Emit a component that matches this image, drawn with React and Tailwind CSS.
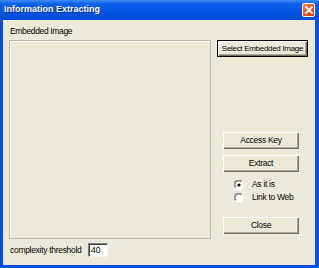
import React, { useState } from "react";

const font = { fontFamily: '"Liberation Sans", Arial, sans-serif' };

const Btn = ({ children, isDefault, className = "" }) => (
  <div
    className={`flex items-center justify-center bg-[#ece9d8] text-black ${
      isDefault
        ? "border border-black text-[8px] tracking-[-0.3px] shadow-[inset_1px_1px_#fff,inset_-1px_-1px_#716f64,inset_-2px_-2px_#aca899]"
        : "text-[8.5px] tracking-[-0.3px] shadow-[inset_1px_1px_#fff,inset_-1px_-1px_#716f64,inset_-2px_-2px_#aca899]"
    } ${className}`}
  >
    {children}
  </div>
);

const Radio = ({ checked, label, onClick }) => (
  <div className="flex items-center h-[13px] pl-[11px] gap-[8px]" onClick={onClick}>
    <svg width="10" height="10" viewBox="0 0 10 10">
      <circle cx="5" cy="5" r="4.5" fill="#fff" />
      <path d="M1.2 7.6 A4.3 4.3 0 0 1 7.6 1.2" fill="none" stroke="#808080" strokeWidth="1" />
      <path d="M2 7 A3.4 3.4 0 0 1 7 2" fill="none" stroke="#404040" strokeWidth="0.8" />
      <path d="M8.8 2.4 A4.3 4.3 0 0 1 2.4 8.8" fill="none" stroke="#f4f3ee" strokeWidth="1" />
      {checked && <circle cx="5" cy="5" r="1.6" fill="#000" />}
    </svg>
    <span className="text-[8.5px] tracking-[-0.3px] text-black">{label}</span>
  </div>
);

export default function App() {
  const [mode, setMode] = useState(0);

  return (
    <div className="w-[319px] h-[268px] flex flex-col bg-[#0a4fdf] overflow-hidden" style={font}>
      {/* title bar */}
      <div className="h-[20px] flex items-center justify-between pl-[4px] pr-[4px] bg-[linear-gradient(180deg,#3d8df5_0%,#0b5fe8_20%,#0055e5_60%,#0049d6_100%)]">
        <span className="text-white font-bold text-[9px] [text-shadow:1px_1px_#0a2a8a]">
          Information Extracting
        </span>
        <div className="w-[13px] h-[14px] rounded-[2px] border border-white bg-[linear-gradient(135deg,#f08a5c_0%,#e0491b_60%,#c83a10_100%)] flex items-center justify-center">
          <svg width="8" height="8" viewBox="0 0 8 8">
            <path d="M1 1 L7 7 M7 1 L1 7" stroke="#fff" strokeWidth="1.8" strokeLinecap="square" />
          </svg>
        </div>
      </div>

      {/* frame + body */}
      <div className="flex-1 flex pl-[3px] pr-[4px] pb-[3px]">
        <div className="flex-1 bg-[#ece9d8] flex flex-col pl-[6px] pt-[4px]">
          <div className="flex">
            <div className="flex flex-col w-[202px]">
              <div className="h-[16px] leading-[14px] pl-[1px] text-[8.5px] tracking-[-0.35px] text-black">
                Embedded Image
              </div>
              <div className="h-[199px] border border-[#bdbaa9] shadow-[inset_1px_1px_#fff] bg-[#ece9d8]" />
            </div>
            <div className="ml-[6px] flex flex-col pt-[16px]">
              <Btn isDefault className="w-[91px] h-[17px]">
                Select Embedded Image
              </Btn>
              <div className="pl-[6px] flex flex-col">
                <Btn className="w-[76px] h-[17px] mt-[75px]">Access Key</Btn>
                <Btn className="w-[76px] h-[17px] mt-[6px]">Extract</Btn>
                <div className="mt-[6px] flex flex-col">
                  <Radio checked={mode === 0} label="As it is" onClick={() => setMode(0)} />
                  <Radio checked={mode === 1} label="Link to Web" onClick={() => setMode(1)} />
                </div>
                <Btn className="w-[76px] h-[17px] mt-[13px]">Close</Btn>
              </div>
            </div>
          </div>

          <div className="flex items-center mt-[4px] h-[14px]">
            <span className="pl-[1px] w-[79px] text-[8.5px] tracking-[-0.3px] text-black">
              complexity threshold
            </span>
            <div className="w-[20px] h-[14px] bg-white border-t border-l border-[#808080] border-b border-r border-b-[#f4f3ee] border-r-[#f4f3ee] shadow-[inset_1px_1px_#404040] flex items-center pl-[2px] text-[8.5px] text-black">
              40
            </div>
          </div>
        </div>
      </div>
    </div>
  );
}
